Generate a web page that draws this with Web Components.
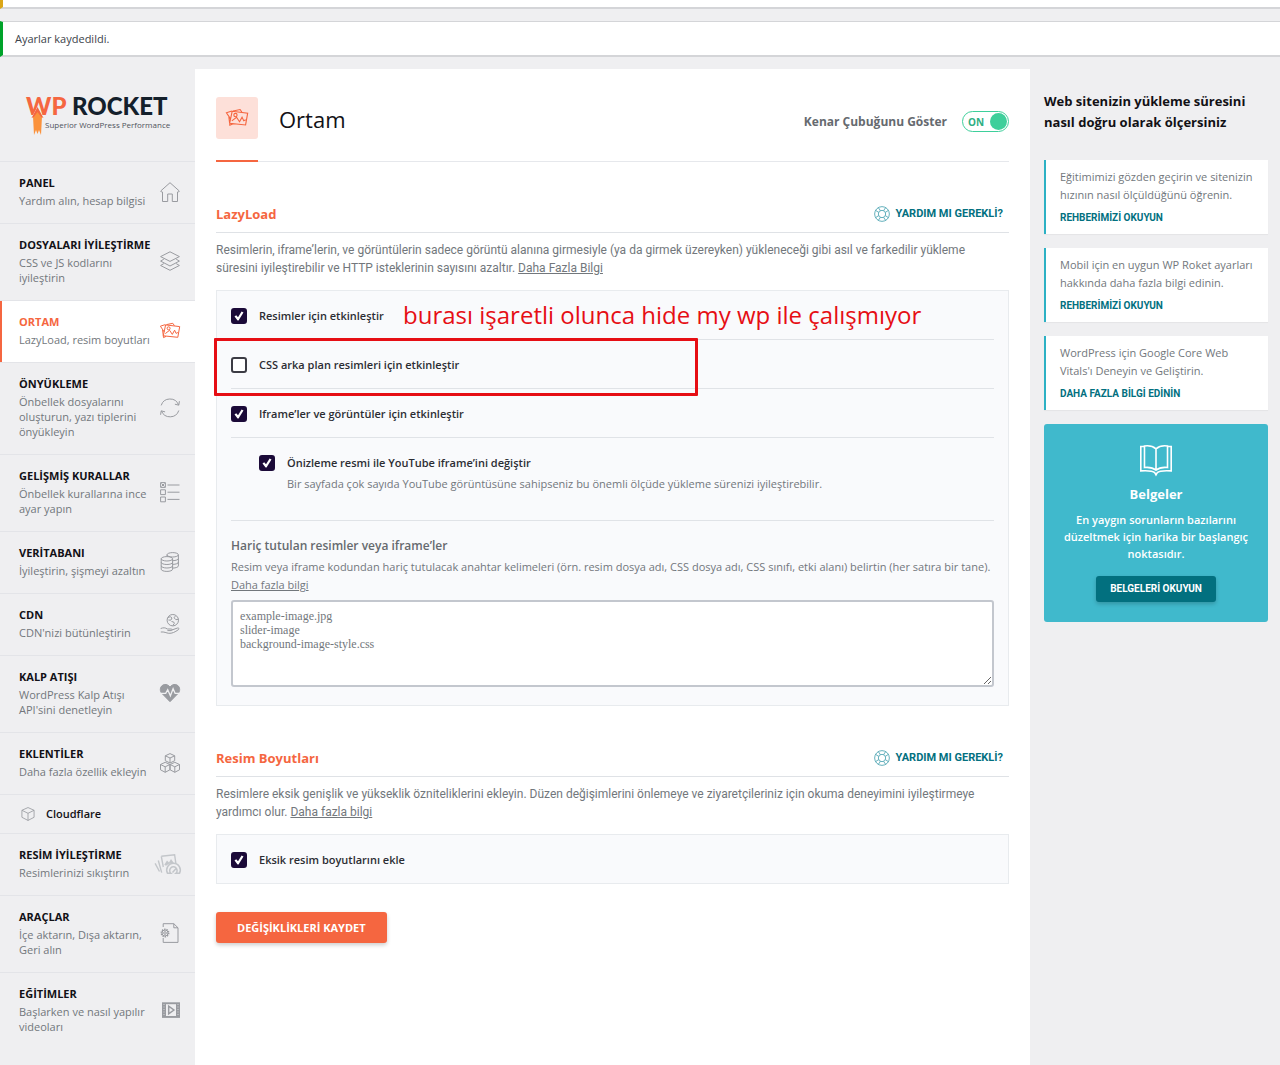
<!DOCTYPE html>
<html lang="tr">
<head>
<meta charset="utf-8">
<meta name="viewport" content="width=device-width, initial-scale=1">
<title>WP Rocket - Ortam</title>
<style>
    body {
        margin: 0;
        background: #efeff1;
        color: #72777c;
        font-family: "Open Sans", "Noto Sans", sans-serif;
        font-size: 12px;
        line-height: 18px;
    }
    .layout {
        display: flex;
        align-items: stretch;
        margin-top: 12px;
        min-height: calc(100vh - 69px);
    }
    .layout > nav { flex: 0 0 195px; }
    .layout > main { flex: 1; min-width: 0; background: #fff; padding: 28px 21px; box-sizing: border-box; }
    .layout > aside { flex: 0 0 224px; padding: 22px 12px 22px 14px; }
    aside h2 { margin: 0 0 27px; font-size: 13px; line-height: 21px; color: #121116; }
    .cards { display: flex; flex-direction: column; gap: 14px; }
    a { color: inherit; }
</style>
</head>
<body>

<wpr-notice kind="warning"></wpr-notice>
<wpr-notice kind="success">Ayarlar kaydedildi.</wpr-notice>

<div class="layout">
    <nav>
        <wpr-logo></wpr-logo>
        <wpr-nav-item icon="home" label="PANEL">Yardım alın, hesap bilgisi</wpr-nav-item>
        <wpr-nav-item icon="layers" label="DOSYALARI İYİLEŞTİRME">CSS ve JS kodlarını iyileştirin</wpr-nav-item>
        <wpr-nav-item icon="media" label="ORTAM" active>LazyLoad, resim boyutları</wpr-nav-item>
        <wpr-nav-item icon="refresh" label="ÖNYÜKLEME">Önbellek dosyalarını oluşturun, yazı tiplerini önyükleyin</wpr-nav-item>
        <wpr-nav-item icon="rules" label="GELİŞMİŞ KURALLAR">Önbellek kurallarına ince ayar yapın</wpr-nav-item>
        <wpr-nav-item icon="database" label="VERİTABANI">İyileştirin, şişmeyi azaltın</wpr-nav-item>
        <wpr-nav-item icon="cdn" label="CDN">CDN'nizi bütünleştirin</wpr-nav-item>
        <wpr-nav-item icon="heart" label="KALP ATIŞI">WordPress Kalp Atışı API'sini denetleyin</wpr-nav-item>
        <wpr-nav-item icon="addons" label="EKLENTİLER">Daha fazla özellik ekleyin</wpr-nav-item>
        <wpr-nav-item icon="cube" label="Cloudflare" sub></wpr-nav-item>
        <wpr-nav-item icon="imagify" label="RESİM İYİLEŞTİRME">Resimlerinizi sıkıştırın</wpr-nav-item>
        <wpr-nav-item icon="tools" label="ARAÇLAR">İçe aktarın, Dışa aktarın, Geri alın</wpr-nav-item>
        <wpr-nav-item icon="film" label="EĞİTİMLER">Başlarken ve nasıl yapılır videoları</wpr-nav-item>
    </nav>

    <main>
        <wpr-page-header icon="media">
            Ortam
            <wpr-toggle slot="tools" label="Kenar Çubuğunu Göster"></wpr-toggle>
        </wpr-page-header>

        <wpr-section heading="LazyLoad">
            <span slot="intro">Resimlerin, iframe’lerin, ve görüntülerin sadece görüntü alanına girmesiyle (ya da girmek üzereyken) yükleneceği gibi asıl ve farkedilir yükleme süresini iyileştirebilir ve HTTP isteklerinin sayısını azaltır. <a href="#lazyload">Daha Fazla Bilgi</a></span>
            <wpr-check label="Resimler için etkinleştir" checked>
                <wpr-note slot="note">burası işaretli olunca hide my wp ile çalışmıyor</wpr-note>
            </wpr-check>
            <wpr-check label="CSS arka plan resimleri için etkinleştir" marked></wpr-check>
            <wpr-check label="Iframe’ler ve görüntüler için etkinleştir" checked></wpr-check>
            <wpr-check label="Önizleme resmi ile YouTube iframe’ini değiştir" checked nested>Bir sayfada çok sayıda YouTube görüntüsüne sahipseniz bu önemli ölçüde yükleme sürenizi iyileştirebilir.</wpr-check>
            <wpr-exclusions label="Hariç tutulan resimler veya iframe’ler">Resim veya iframe kodundan hariç tutulacak anahtar kelimeleri (örn. resim dosya adı, CSS dosya adı, CSS sınıfı, etki alanı) belirtin (her satıra bir tane). <a href="#exclude">Daha fazla bilgi</a></wpr-exclusions>
        </wpr-section>

        <wpr-section heading="Resim Boyutları">
            <span slot="intro">Resimlere eksik genişlik ve yükseklik özniteliklerini ekleyin. Düzen değişimlerini önlemeye ve ziyaretçileriniz için okuma deneyimini iyileştirmeye yardımcı olur. <a href="#dimensions">Daha fazla bilgi</a></span>
            <wpr-check label="Eksik resim boyutlarını ekle" checked last></wpr-check>
        </wpr-section>

        <wpr-save>DEĞİŞİKLİKLERİ KAYDET</wpr-save>
    </main>

    <aside>
        <h2>Web sitenizin yükleme süresini nasıl doğru olarak ölçersiniz</h2>
        <div class="cards">
            <wpr-guide action="REHBERİMİZİ OKUYUN">Eğitimimizi gözden geçirin ve sitenizin hızının nasıl ölçüldüğünü öğrenin.</wpr-guide>
            <wpr-guide action="REHBERİMİZİ OKUYUN">Mobil için en uygun WP Roket ayarları hakkında daha fazla bilgi edinin.</wpr-guide>
            <wpr-guide action="DAHA FAZLA BİLGİ EDİNİN">WordPress için Google Core Web Vitals'ı Deneyin ve Geliştirin.</wpr-guide>
            <wpr-docs heading="Belgeler" action="BELGELERİ OKUYUN">En yaygın sorunların bazılarını düzeltmek için harika bir başlangıç noktasıdır.</wpr-docs>
        </div>
    </aside>
</div>

<script>
(function wpRocket(customElements){
    'use strict';

    // All icons live on a 20x20 grid
    const ICONS = {
        home: '<path d="M2.5 10h-1L.7 9 10 .7 19.3 9l-.8 1h-1M2.5 10v9.500h5.200V12h4.600v7.500h5.200V10"/>',
        layers: '<path d="M.6 5.600 10 .8l9.400 4.800L10 10.400zM3.800 8.200.6 10.100 10 15l9.400-4.900-3.200-1.900M3.800 12.600.6 14.500 10 19.300l9.400-4.800-3.200-1.900"/>',
        media: '<path d="M5.600 3.900 19.700 5.600 17.800 16.300 3.300 14.800zM4.300 11 .4 5.200l4.900-1.600M2.600 9l.9 7.600 2.500-1.200M6.500 3.600 12.800 2.300l1.600 2.300M5.300 12.600 9.600 9.300 12.300 13.400 14.600 9.200l1.500 3.200 1.800-.9"/><circle cx="8.600" cy="7.300" r="1.500"/>',
        refresh: '<path d="M1.200 7.400A9.200 9.200 0 0 1 18.600 7M18.800 12.500A9.200 9.200 0 0 1 1.500 13M19.400 3.200 18.800 7.200 14.900 6.200M.6 16.800 1.200 12.800 5.100 13.900"/>',
        rules: '<path d="M.6.6h4.800v4.800H.6zM.6 7.800h4.800v4.800H.6zM.6 15h4.800v4.800H.6zM1.500 1.500l3 3M4.500 1.500l-3 3M7.500 3h12M7.500 10.200h12M7.500 17.400h12"/>',
        database: '<path d="M1.200 6.800v10.400c0 1.300 2.600 2.200 5.700 2.200s5.700-.9 5.700-2.200V6.800M1.200 10.300c0 1.300 2.600 2.200 5.700 2.200s5.700-.9 5.700-2.200M1.200 13.800c0 1.300 2.600 2.200 5.700 2.200s5.700-.9 5.700-2.200M7 4.400V2.900M18.400 2.900v11c0 1.200-2.500 2.100-5.600 2.200M18.400 6.500c0 1.200-2.500 2.100-5.600 2.200M18.400 10.200c0 1.200-2.500 2.100-5.600 2.200"/><ellipse cx="6.900" cy="6.800" rx="5.700" ry="2.200"/><ellipse cx="12.700" cy="2.800" rx="5.700" ry="2.200"/>',
        cdn: '<circle cx="12.800" cy="6.200" r="5.700"/><path d="M8 3.500l2.300-.8 1.700 1.300-1.200 2.200-2.400-.2M11.500 7.500l2.200.5.6 1.500-1.500 2M15.300 2.100l-1.200 1.700 1.800 1.900 2.300-.4M.7 14.500c2.600-1 4.600-1 6.600.5h4c1 0 1 1.600 0 1.600H7.400M11.800 16l5.700-2c1.300-.3 1.900.7 1 1.600-3.600 2.600-6.700 4-9.700 3.700-2.600-.3-4.500-1.700-8-1.300"/>',
        heart: '<path d="M10 18.700 1.500 10C-.7 7.200.2 2.600 4.200 1.600 6.700 1 8.800 2.300 10 4.200 11.200 2.300 13.300 1 15.800 1.600c4 1 4.900 5.600 2.700 8.400z" fill="currentColor"/><path d="M.5 10.300h5.200l2-3.500 2.700 6 2.700-7 2 4.500h4.400" stroke="#efeff1" stroke-width="1.300"/>',
        addons: '<path d="M10 .6l4.700 2.200v4.900L10 10 5.300 7.700V2.800zM5.300 2.800 10 5l4.700-2.200M10 5v5M5.200 9.300l4.700 2.200v5.300l-4.700 2.500-4.700-2.500v-5.300zM.5 11.500l4.700 2.300 4.700-2.300M5.200 13.800v5.500M14.800 9.300l4.700 2.200v5.300l-4.700 2.500-4.700-2.500v-5.300zM10.100 11.500l4.700 2.300 4.700-2.300M14.800 13.800v5.500"/>',
        cube: '<path d="M10 .8l8.700 3.900v10L10 19.200l-8.700-4.500v-10zM1.300 4.700 10 9l8.700-4.300M10 9v10.200" stroke-width="1.200"/>',
        imagify: '<path d="M5.300 2.300 18.600.7l1.300 9M7.300 13 5.300 2.300M2.300 6.500 5.700 18.600M-.9 9.300 3.500 17.500" stroke-width="1.400"/><path d="M8.300 10.700l2.700-4.200 2 2 2-3.600 3 4.300-5 .6-3 2z" fill="currentColor" stroke="none"/><path d="M11.500 19.300a6.800 6.800 0 1 1 12 0h-3.600a3.700 3.700 0 1 0-5 0zM16.500 18.500l4-4.500" stroke-width="1.500"/>',
        tools: '<path d="M3.200 4V.7h10.600L18 4.800v14.600H3.200V15M13.800.7v4.100H18"/><circle cx="5" cy="10" r="3.700" stroke-width="1.500" stroke-dasharray="1.400 .9"/><circle cx="5" cy="10" r="3"/><circle cx="5" cy="10" r="1.300"/>',
        film: '<path d="M2 2.300h18v15.600H2z" fill="currentColor" stroke="none"/><path d="M6 4.200h10v11.800H6z" fill="#efeff1" stroke="none"/><path d="M8.700 6.200v7.600l5.200-3.800z" stroke-width="1.500"/><path d="M4 4v12.500M18 4v12.500" stroke="#efeff1" stroke-width=".7" stroke-dasharray="1 1.500"/>',
        lifebuoy: '<circle cx="10" cy="10" r="9.200"/><circle cx="10" cy="10" r="4.600"/><path d="M5.400 1.900 8 5.800M1.900 5.400 5.800 8M14.600 1.900 12 5.800M18.100 5.400 14.200 8M5.400 18.100 8 14.200M1.900 14.600 5.800 12M14.600 18.100 12 14.200M18.100 14.600 14.200 12"/>',
        book: '<path d="M10 3C8 1.200 5.500.8 2.800 1.200v13.500c2.700-.3 5.200 0 7.200 1.700 2-1.700 4.500-2 7.200-1.700V1.200C14.500.8 12 1.200 10 3v13.400M2.800 1.600H.5v15.200c3.700-.2 7.500-.1 8.700 1.100L10 19.300l.8-1.400c1.200-1.200 5-1.300 8.700-1.100V1.600h-2.300"/>'
    };

    // Shared start-up: every element renders its own template once
    class WprElement extends HTMLElement {
        constructor(){
            super();
            this.attachShadow({mode: 'open'});
        }

        connectedCallback(){
            this.shadowRoot.innerHTML = this.render();
        }

        attr(name){
            return this.getAttribute(name) || '';
        }
    }

    class WprIcon extends WprElement {
        render(){
            return `
            <style>
                :host { display: block; flex: none; width: 20px; height: 20px; }
                svg { display: block; width: 100%; height: 100%; overflow: visible; fill: none; stroke: currentColor; }
            </style>
            <svg viewBox="0 0 20 20" aria-hidden="true">${ICONS[this.attr('name')]}</svg>`;
        }
    }

    class WprNotice extends WprElement {
        render(){
            return `
            <style>
                :host { display: block; box-sizing: border-box; background: #fff; border: 1px solid #d4d5d8; border-width: 1px 0 2px 3px; color: #3c434a; }
                :host([kind="warning"]) { height: 9px; border-top: 0; border-left-color: #dba617; margin-bottom: 12px; }
                :host([kind="success"]) { border-left-color: #00a32a; padding: 8px 12px; font-weight: 500; font-size: 11px; line-height: 17px; }
            </style>
            <slot></slot>`;
        }
    }

    class WprLogo extends WprElement {
        render(){
            return `
            <style>
                :host { display: flex; height: 92px; padding-left: 20px; }
                svg { width: 160px; height: 60px; margin-top: 16px; overflow: visible; }
                text { font-family: Lato, sans-serif; font-weight: 900; font-size: 24px; }
                .tag { font-family: "Open Sans", sans-serif; font-weight: 500; font-size: 8px; }
            </style>
            <svg viewBox="0 0 160 60" role="img" aria-label="WP Rocket">
                <text x="6" y="30" fill="#f56640">WP</text>
                <text x="52" y="30" fill="#14202b">ROCKET</text>
                <path d="M12.500 31l5-9.500 5 9.500z" fill="#efeff1"/>
                <path d="M17.500 24.500l4.500 7-1 18.500-2-5-1.500 4-1.500-4-2 5-1-18.500z" fill="#fb923c"/>
                <path d="M11.500 33l6-11 6 11-2.300-1-3.700-5-3.700 5z" fill="#f56640"/>
                <text class="tag" x="25" y="43" fill="#50545c">Superior WordPress Performance</text>
            </svg>`;
        }
    }

    class WprNavItem extends WprElement {
        render(){
            const icon = `<wpr-icon name="${this.attr('icon')}"></wpr-icon>`;
            return `
            <style>
                :host { display: block; border-top: 1px solid #e3e4e8; }
                a { display: flex; align-items: center; justify-content: space-between; padding: 13px 15px 15px 19px; color: inherit; text-decoration: none; }
                strong { display: block; margin-bottom: 2px; font-size: 11px; line-height: 16px; color: #121116; white-space: nowrap; }
                .text { flex: 1; white-space: normal; }
                .desc { display: block; width: 128px; font-size: 11px; line-height: 15px; }
                wpr-icon { color: #999ba0; }
                :host([icon="imagify"]) wpr-icon { color: #c3c6ca; margin-right: 4px; }
                :host([active]) { background: #fff; }
                :host([active]) a { border-left: 2px solid #f56640; padding-left: 17px; }
                :host([active]) .desc { width: auto; white-space: nowrap; }
                :host([active]) strong, :host([active]) wpr-icon { color: #f56640; }
                :host([sub]) a { gap: 11px; padding: 10px 21px; }
                :host([sub]) strong { margin: 0; font-weight: 600; line-height: 18px; }
                :host([sub]) wpr-icon { width: 14px; height: 14px; }
            </style>
            <a href="#${this.attr('icon')}">
                ${this.hasAttribute('sub') ? icon : ''}
                <span class="text"><strong>${this.attr('label')}</strong><span class="desc"><slot></slot></span></span>
                ${this.hasAttribute('sub') ? '' : icon}
            </a>`;
        }
    }

    class WprPageHeader extends WprElement {
        render(){
            return `
            <style>
                :host { display: block; border-bottom: 1px solid #e6e8ec; margin-bottom: 42px; }
                header { display: flex; align-items: flex-start; }
                .mark { box-sizing: border-box; width: 42px; height: 65px; margin-bottom: -1px; border-bottom: 2px solid #f56640; }
                .tile { display: grid; place-items: center; height: 42px; border-radius: 3px; background: #fde0d9; color: #f56640; }
                .tile wpr-icon { width: 22px; height: 22px; }
                h1 { flex: 1; margin: 7px 0 0 21px; font-size: 22px; line-height: 30px; font-weight: 500; color: #121116; }
                ::slotted([slot="tools"]) { margin-top: 14px; }
            </style>
            <header>
                <div class="mark"><div class="tile"><wpr-icon name="${this.attr('icon')}"></wpr-icon></div></div>
                <h1><slot></slot></h1>
                <slot name="tools"></slot>
            </header>`;
        }
    }

    class WprToggle extends WprElement {
        render(){
            return `
            <style>
                :host { display: block; }
                label { display: flex; align-items: center; gap: 15px; font-weight: 700; color: #666a6f; }
                .switch { position: relative; display: flex; align-items: center; box-sizing: border-box; width: 47px; height: 21px; padding-left: 5px; border: 1px solid #3ecf9b; border-radius: 11px; color: #2fae82; font-size: 10px; }
                .switch::after { content: ""; position: absolute; right: 1px; top: 1px; width: 17px; height: 17px; border-radius: 50%; background: #3ecf9b; }
                input { position: absolute; inset: 0; width: 100%; height: 100%; margin: 0; opacity: 0; }
            </style>
            <label>${this.attr('label')}<span class="switch"><input type="checkbox" role="switch" checked>ON</span></label>`;
        }
    }

    class WprSection extends WprElement {
        render(){
            return `
            <style>
                :host { display: block; margin-bottom: 42px; }
                header { display: flex; align-items: center; justify-content: space-between; padding-bottom: 8px; border-bottom: 1px solid #dfe2e6; }
                h2 { margin: 0; font-size: 13px; line-height: 20px; color: #f56640; }
                a { display: flex; align-items: center; gap: 6px; padding-right: 6px; color: #02707f; font-family: Roboto, sans-serif; font-size: 11px; font-weight: 700; text-decoration: none; }
                wpr-icon { width: 16px; height: 16px; color: #3f9dac; }
                p { margin: 8px 0 13px; font-family: Roboto, sans-serif; }
                .panel { padding: 0 14px; border: 1px solid #e8ebee; background: #f9fafc; }
            </style>
            <header>
                <h2>${this.attr('heading')}</h2>
                <a href="#help"><wpr-icon name="lifebuoy"></wpr-icon>YARDIM MI GEREKLİ?</a>
            </header>
            <p><slot name="intro"></slot></p>
            <div class="panel"><slot></slot></div>`;
        }
    }

    class WprCheck extends WprElement {
        render(){
            return `
            <style>
                :host { display: block; position: relative; padding: 17px 0 15px; border-bottom: 1px solid #e0e3e7; line-height: 16px; }
                :host([last]) { border-bottom: 0; }
                :host([nested]) { padding: 17px 0 28px 28px; }
                .field { display: flex; align-items: center; gap: 12px; }
                input { appearance: none; flex: none; display: grid; place-items: center; box-sizing: border-box; width: 16px; height: 16px; margin: 0; border: 2px solid #3c3c44; border-radius: 3px; background: #fff; }
                input:checked { border-color: #1b0a38; background: #1b0a38; }
                input:checked::before { content: ""; width: 10px; height: 10px; background: #fff; clip-path: polygon(5% 55%, 22% 42%, 40% 62%, 76% 5%, 95% 14%, 45% 95%, 36% 95%); }
                label { color: #2c2d33; font-size: 11px; font-weight: 600; }
                .help { margin: 5px 0 0 28px; font-size: 11px; }
                /* red frame drawn over the row that causes the conflict */
                .frame { position: absolute; left: -17px; top: -2px; width: 484px; height: 58px; box-sizing: border-box; border: 3px solid #e60e14; border-radius: 1px; }
            </style>
            <div class="field">
                <input type="checkbox" id="option" ${this.hasAttribute('checked') ? 'checked' : ''}>
                <label for="option">${this.attr('label')}</label>
                <slot name="note"></slot>
            </div>
            ${this.hasAttribute('nested') ? '<div class="help"><slot></slot></div>' : ''}
            ${this.hasAttribute('marked') ? '<div class="frame"></div>' : ''}`;
        }
    }

    class WprNote extends WprElement {
        render(){
            return `
            <style>
                :host { position: absolute; left: 172px; top: 8px; font-size: 24px; line-height: 32px; white-space: nowrap; color: #e60e14; }
            </style>
            <slot></slot>`;
        }
    }

    class WprExclusions extends WprElement {
        render(){
            return `
            <style>
                :host { display: block; padding: 16px 0 18px; }
                label { display: block; font-weight: 600; font-size: 12px; color: #666a6f; }
                p { margin: 3px 0 6px; font-size: 11px; }
                textarea { display: block; box-sizing: border-box; width: 100%; height: 87px; margin: 0; padding: 7px; border: 2px solid #c3c7ce; border-radius: 3px; background: #fff; color: #72777c; font: 12px/14px "Liberation Serif", serif; resize: vertical; }
                textarea::placeholder { color: #72777c; opacity: 1; }
            </style>
            <label for="exclude">${this.attr('label')}</label>
            <p><slot></slot></p>
            <textarea id="exclude" placeholder="example-image.jpg&#10;slider-image&#10;background-image-style.css"></textarea>`;
        }
    }

    class WprSave extends WprElement {
        render(){
            return `
            <style>
                :host { display: block; margin-top: -14px; }
                button { height: 31px; padding: 0 21px; border: 0; border-radius: 3px; background: #f56640; color: #fff; font: 700 11px/31px "Open Sans", sans-serif; box-shadow: 0 2px 4px rgba(0, 0, 0, .2); }
            </style>
            <button type="button"><slot></slot></button>`;
        }
    }

    class WprGuide extends WprElement {
        render(){
            return `
            <style>
                :host { display: block; padding: 8px 14px 7px; border-left: 2px solid #2cb1c4; background: #fff; font-size: 11px; box-shadow: 0 1px 1px rgba(0, 0, 0, .04); }
                a { display: block; margin-top: 5px; color: #02707f; font-family: Roboto, sans-serif; font-size: 10px; font-weight: 700; text-decoration: none; }
            </style>
            <slot></slot>
            <a href="#guide">${this.attr('action')}</a>`;
        }
    }

    class WprDocs extends WprElement {
        render(){
            return `
            <style>
                :host { display: flex; flex-direction: column; align-items: center; padding: 20px 18px; border-radius: 3px; background: #40b9cc; color: #fff; text-align: center; }
                wpr-icon { width: 32px; height: 32px; }
                h3 { margin: 8px 0 7px; font-size: 13px; line-height: 20px; }
                p { margin: 0 0 14px; font-size: 11px; line-height: 17px; font-weight: 600; }
                a { padding: 0 14px; border-radius: 3px; background: #02707f; color: #fff; font-family: Roboto, sans-serif; font-size: 10px; line-height: 26px; font-weight: 700; text-decoration: none; box-shadow: 0 2px 4px rgba(0, 0, 0, .2); }
            </style>
            <wpr-icon name="book"></wpr-icon>
            <h3>${this.attr('heading')}</h3>
            <p><slot></slot></p>
            <a href="#docs">${this.attr('action')}</a>`;
        }
    }

    customElements.define('wpr-icon', WprIcon);
    customElements.define('wpr-notice', WprNotice);
    customElements.define('wpr-logo', WprLogo);
    customElements.define('wpr-nav-item', WprNavItem);
    customElements.define('wpr-page-header', WprPageHeader);
    customElements.define('wpr-toggle', WprToggle);
    customElements.define('wpr-section', WprSection);
    customElements.define('wpr-check', WprCheck);
    customElements.define('wpr-note', WprNote);
    customElements.define('wpr-exclusions', WprExclusions);
    customElements.define('wpr-save', WprSave);
    customElements.define('wpr-guide', WprGuide);
    customElements.define('wpr-docs', WprDocs);
})(window.customElements);
</script>
</body>
</html>
